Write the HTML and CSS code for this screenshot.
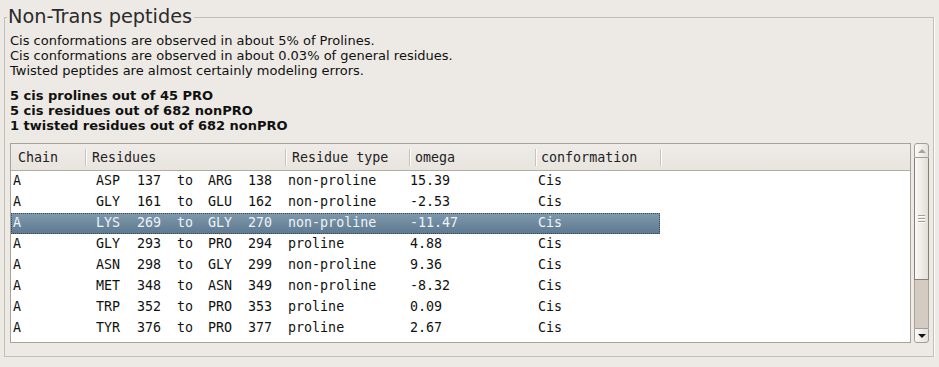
FILE: index.html
```html
<!DOCTYPE html>
<html>
  <head>
    <title>Non-Trans peptides</title>
    <link rel="stylesheet" href="styles.css">
  </head>
  <body>
    <fieldset class="panel">
      <legend class="panel-title">Non-Trans peptides</legend>

      <div class="notes">
        <div>Cis conformations are observed in about 5% of Prolines.</div>
        <div>Cis conformations are observed in about 0.03% of general residues.</div>
        <div>Twisted peptides are almost certainly modeling errors.</div>
      </div>

      <div class="counts">
        <div>5 cis prolines out of 45 PRO</div>
        <div>5 cis residues out of 682 nonPRO</div>
        <div>1 twisted residues out of 682 nonPRO</div>
      </div>

      <div class="table-area">
        <div class="tree">
          <div class="tree-head">
            <div class="hcol c-chain">Chain</div>
            <div class="hcol c-res">Residues</div>
            <div class="hcol c-type">Residue type</div>
            <div class="hcol c-omega">omega</div>
            <div class="hcol c-conf">conformation</div>
          </div>

          <div class="row">
            <div class="cell c-chain">A</div>
            <div class="cell c-res"><span class="r1">ASP</span><span class="r2">137</span><span class="r3">to</span><span class="r4">ARG</span><span>138</span></div>
            <div class="cell c-type">non-proline</div>
            <div class="cell c-omega">15.39</div>
            <div class="cell c-conf">Cis</div>
          </div>
          <div class="row">
            <div class="cell c-chain">A</div>
            <div class="cell c-res"><span class="r1">GLY</span><span class="r2">161</span><span class="r3">to</span><span class="r4">GLU</span><span>162</span></div>
            <div class="cell c-type">non-proline</div>
            <div class="cell c-omega">-2.53</div>
            <div class="cell c-conf">Cis</div>
          </div>
          <div class="row selected">
            <div class="cell c-chain">A</div>
            <div class="cell c-res"><span class="r1">LYS</span><span class="r2">269</span><span class="r3">to</span><span class="r4">GLY</span><span>270</span></div>
            <div class="cell c-type">non-proline</div>
            <div class="cell c-omega">-11.47</div>
            <div class="cell c-conf">Cis</div>
          </div>
          <div class="row">
            <div class="cell c-chain">A</div>
            <div class="cell c-res"><span class="r1">GLY</span><span class="r2">293</span><span class="r3">to</span><span class="r4">PRO</span><span>294</span></div>
            <div class="cell c-type">proline</div>
            <div class="cell c-omega">4.88</div>
            <div class="cell c-conf">Cis</div>
          </div>
          <div class="row">
            <div class="cell c-chain">A</div>
            <div class="cell c-res"><span class="r1">ASN</span><span class="r2">298</span><span class="r3">to</span><span class="r4">GLY</span><span>299</span></div>
            <div class="cell c-type">non-proline</div>
            <div class="cell c-omega">9.36</div>
            <div class="cell c-conf">Cis</div>
          </div>
          <div class="row">
            <div class="cell c-chain">A</div>
            <div class="cell c-res"><span class="r1">MET</span><span class="r2">348</span><span class="r3">to</span><span class="r4">ASN</span><span>349</span></div>
            <div class="cell c-type">non-proline</div>
            <div class="cell c-omega">-8.32</div>
            <div class="cell c-conf">Cis</div>
          </div>
          <div class="row">
            <div class="cell c-chain">A</div>
            <div class="cell c-res"><span class="r1">TRP</span><span class="r2">352</span><span class="r3">to</span><span class="r4">PRO</span><span>353</span></div>
            <div class="cell c-type">proline</div>
            <div class="cell c-omega">0.09</div>
            <div class="cell c-conf">Cis</div>
          </div>
          <div class="row">
            <div class="cell c-chain">A</div>
            <div class="cell c-res"><span class="r1">TYR</span><span class="r2">376</span><span class="r3">to</span><span class="r4">PRO</span><span>377</span></div>
            <div class="cell c-type">proline</div>
            <div class="cell c-omega">2.67</div>
            <div class="cell c-conf">Cis</div>
          </div>
        </div>

        <div class="scrollbar">
          <div class="sb-btn sb-up"><span class="arrow-up"></span></div>
          <div class="sb-thumb">
            <span class="grip"></span>
            <span class="grip"></span>
            <span class="grip"></span>
          </div>
          <div class="sb-trough"></div>
          <div class="sb-btn sb-down"><span class="arrow-down"></span></div>
        </div>
      </div>
    </fieldset>
  </body>
</html>
```

FILE: styles.css
```css
/* page */
body {
  margin: 0;
  background-color: #edeae5;
  color: #111;
  font-family: "DejaVu Sans", "Liberation Sans", sans-serif;
}

/* frame with title */
.panel {
  margin: 6px 5px 0 4px;
  padding: 0 4px 13px 5px;
  border: 1px solid #c3bfb7;
  box-shadow: 1px 1px 0 #fff;
  min-width: 0;
}

.panel-title {
  margin-left: -3px;
  padding: 0 2px 0 1px;
  font-size: 19.3px;
  line-height: 22px;
  color: #2b2b2b;
}

/* text blocks */
.notes {
  margin-top: 5px;
  font-size: 13px;
  line-height: 15px;
}

.counts {
  margin-top: 10px;
  font-size: 13px;
  line-height: 15px;
  font-weight: bold;
}

/* list + scrollbar */
.table-area {
  display: flex;
  gap: 3px;
  margin-top: 10px;
  height: 200px;
}

.tree {
  flex: 1;
  border: 1px solid #a8a398;
  background-color: #fff;
  overflow: hidden;
  font-family: "DejaVu Sans Mono", "Liberation Mono", monospace;
  font-size: 13.33px;
}

.tree-head {
  display: flex;
  height: 26px;
  border-bottom: 1px solid #b3aea4;
  background: linear-gradient(#efece8, #e8e4de);
  color: #222;
}

.hcol {
  position: relative;
  line-height: 27px;
  padding-left: 7px;
  box-sizing: border-box;
}

.hcol::after {
  content: "";
  position: absolute;
  right: -1px;
  top: 5px;
  bottom: 4px;
  width: 1px;
  background-color: #c7c2ba;
  box-shadow: 1px 0 0 #fff;
}

.c-chain { width: 74px; }
.c-res { width: 200px; }
.c-type { width: 124px; }
.c-omega { width: 126px; }
.c-conf { width: 125px; }

.hcol.c-omega, .hcol.c-conf { padding-left: 6px; }

/* rows */
.row {
  display: flex;
  height: 21px;
  line-height: 20px;
  width: 649px;
  box-sizing: border-box;
}

.cell {
  white-space: pre;
  box-sizing: border-box;
}

.cell.c-chain { padding-left: 2px; }
.cell.c-res { padding-left: 11px; }
.cell.c-type { padding-left: 3px; }
.cell.c-omega { padding-left: 1px; }
.cell.c-conf { padding-left: 3px; }

.c-res span { display: inline-block; }
.r1 { width: 41px; }
.r2 { width: 40px; }
.r3 { width: 31px; }
.r4 { width: 40px; }

.row.selected {
  background: linear-gradient(#7f98ac, #5e7a90);
  outline: 1px dotted #33485a;
  outline-offset: -1px;
  color: #eef3f7;
}

/* scrollbar */
.scrollbar {
  width: 15px;
  display: flex;
  flex-direction: column;
}

.sb-btn {
  height: 15px;
  box-sizing: border-box;
  border: 1px solid #a39e95;
  background: linear-gradient(to right, #fbfaf9, #e4e0da);
  display: flex;
  align-items: center;
  justify-content: center;
}

.sb-up { border-radius: 3px 3px 0 0; }
.sb-down { border-radius: 0 0 3px 3px; }

.arrow-up {
  width: 0;
  height: 0;
  border-left: 4px solid transparent;
  border-right: 4px solid transparent;
  border-bottom: 4px solid #a7a39c;
}

.arrow-down {
  width: 0;
  height: 0;
  border-left: 4px solid transparent;
  border-right: 4px solid transparent;
  border-top: 4px solid #111;
}

.sb-thumb {
  height: 122px;
  box-sizing: border-box;
  border-left: 1px solid #857f76;
  border-right: 1px solid #857f76;
  border-bottom: 1px solid #857f76;
  background: linear-gradient(to right, #fbfaf9, #e2ddd6);
  display: flex;
  flex-direction: column;
  align-items: center;
  justify-content: center;
  gap: 2px;
}

.grip {
  width: 7px;
  height: 1px;
  background-color: #a49f96;
  box-shadow: 0 1px 0 #fff;
}

.sb-trough {
  flex: 1;
  background-color: #d4ccc2;
  border-left: 1px solid #aaa398;
  border-right: 1px solid #aaa398;
}
```
